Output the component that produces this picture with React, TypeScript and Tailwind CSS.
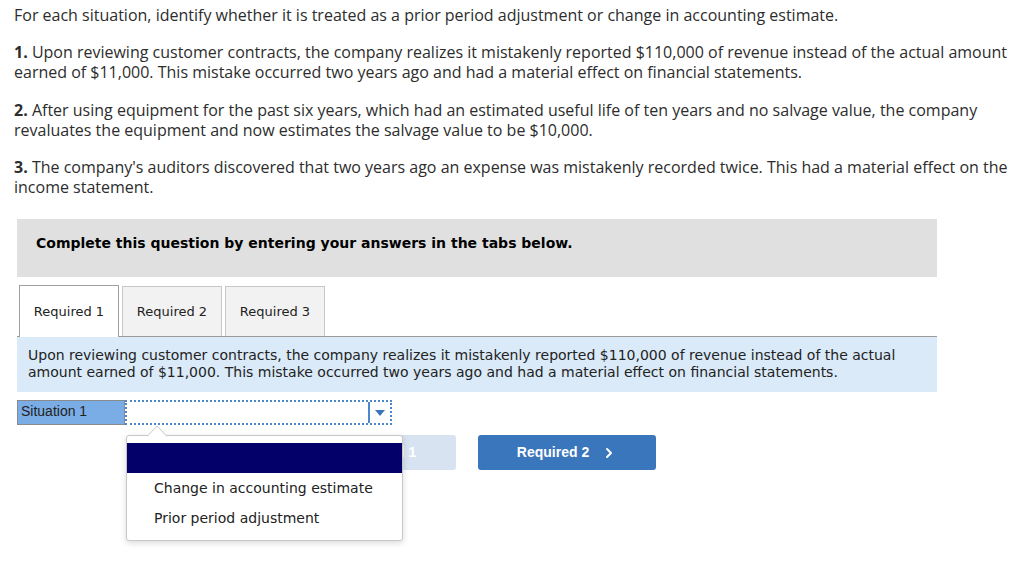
import { ChevronLeft, ChevronRight } from "lucide-react";

const body = "font-['Open_Sans',sans-serif] text-[16px] leading-[20px] text-[#2d2d2d]";
const verdana = "font-['DejaVu_Sans','Verdana',sans-serif]";

const tabs = ["Required 1", "Required 2", "Required 3"];

const SituationDropdown = () => (
  <div className="absolute left-[126px] top-[435px] w-[277px] h-[106px] rounded-[3px] border border-[#c8c8c8] bg-white shadow-[0_2px_6px_rgba(0,0,0,0.15)]">
    <svg
      className="absolute -top-[11px] left-[20px]"
      width="20"
      height="12"
      viewBox="0 0 20 12"
    >
      <path d="M0 11.5 L10 1 L20 11.5" fill="white" stroke="#c8c8c8" />
    </svg>
    <div className="mt-[7px] h-[30px] bg-[#04006a]" />
    <ul className={`${verdana} text-[14px] text-[#222] pl-[27px]`}>
      <li className="h-[30px] leading-[30px]">Change in accounting estimate</li>
      <li className="h-[30px] leading-[30px]">Prior period adjustment</li>
    </ul>
  </div>
);

export default function App() {
  return (
    <div className="relative w-[1024px] h-[561px] overflow-hidden bg-white">
      <div className={`${body} pl-[14px] pt-[5px] whitespace-nowrap`}>
        <p>
          For each situation, identify whether it is treated as a prior period adjustment or change in
          accounting estimate.
        </p>
        <p className="mt-[17px]">
          <b className="font-bold">1.</b> Upon reviewing customer contracts, the company realizes it
          mistakenly reported $110,000 of revenue instead of the actual amount
          <br />
          earned of $11,000. This mistake occurred two years ago and had a material effect on financial
          statements.
        </p>
        <p className="mt-[18px]">
          <b className="font-bold">2.</b> After using equipment for the past six years, which had an
          estimated useful life of ten years and no salvage value, the company
          <br />
          revaluates the equipment and now estimates the salvage value to be $10,000.
        </p>
        <p className="mt-[17px]">
          <b className="font-bold">3.</b> The company's auditors discovered that two years ago an expense
          was mistakenly recorded twice. This had a material effect on the
          <br />
          income statement.
        </p>
      </div>

      <div className="ml-[17px] w-[920px]">
        <div className="mt-[22px] h-[58px] bg-[#e0e0e0] pl-[19px] pt-[15px]">
          <p className={`${verdana} text-[14px] font-bold leading-[18px] text-black`}>
            Complete this question by entering your answers in the tabs below.
          </p>
        </div>

        <div className="mt-[8px] flex items-end gap-[3px] pl-[2px] border-b border-[#9a9a9a]">
          {tabs.map((t, i) => (
            <div
              key={t}
              className={
                i === 0
                  ? `${verdana} -mb-px flex h-[52px] w-[100px] items-center justify-center border border-b-0 border-[#a0a0a0] bg-white text-[13px] text-[#222]`
                  : `${verdana} flex h-[50px] w-[100px] items-center justify-center border border-b-0 border-[#c8c8c8] bg-[#f2f2f2] text-[13px] text-[#222]`
              }
            >
              {t}
            </div>
          ))}
        </div>

        <div className={`${verdana} h-[55px] bg-[#daeaf8] pl-[11px] pt-[10px] text-[14px] leading-[17px] text-[#222]`}>
          Upon reviewing customer contracts, the company realizes it mistakenly reported $110,000 of revenue
          instead of the actual
          <br />
          amount earned of $11,000. This mistake occurred two years ago and had a material effect on financial
          statements.
        </div>

        <div className="mt-[8px] flex h-[25px]">
          <div className="flex w-[108px] items-center border border-[#8a8a8a] bg-[#7aade5] pl-[3px] pb-[3px] font-['Liberation_Sans',Arial,sans-serif] text-[14px] text-[#222]">
            Situation 1
          </div>
          <div className="flex w-[267px] items-center justify-end border-2 border-dotted border-[#4a87cc] bg-white">
            <div className="flex h-full items-center border-l-2 border-[#4a87cc] px-[5px]">
              <svg width="10" height="6" viewBox="0 0 10 6">
                <path d="M0 0 H10 L5 6 Z" fill="#3b76bb" />
              </svg>
            </div>
          </div>
        </div>

        <div className="mt-[10px] ml-[261px] flex gap-[22px] font-['Liberation_Sans',Arial,sans-serif] text-[14px] font-bold text-white">
          <div className="flex h-[35px] w-[178px] items-center justify-center gap-[10px] rounded-[3px] bg-[#d7e3f1]">
            <ChevronLeft className="size-4" strokeWidth={3} />
            Required 1
          </div>
          <div className="flex h-[35px] w-[178px] items-center justify-center gap-[12px] rounded-[3px] bg-[#3a76bb]">
            Required 2
            <ChevronRight className="size-4" strokeWidth={3} />
          </div>
        </div>
      </div>

      <SituationDropdown />
    </div>
  );
}
